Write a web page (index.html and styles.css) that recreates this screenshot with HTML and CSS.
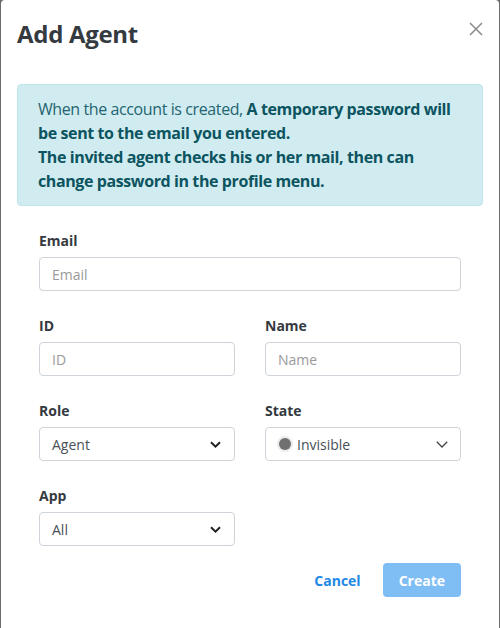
FILE: index.html
```html
<!DOCTYPE html>
<html>
<head>
<meta charset="utf-8">
<link rel="stylesheet" href="styles.css">
</head>
<body>
<div class="modal">
  <div class="modal-header">
    <h4 class="modal-title">Add Agent</h4>
    <button class="close" aria-label="Close">
      <svg width="14" height="14" viewBox="0 0 14 14"><path d="M1 1L13 13M13 1L1 13" stroke="#8a8a8a" stroke-width="1.5" fill="none"/></svg>
    </button>
  </div>
  <div class="modal-body">
    <div class="alert">
      <span class="plain">When the account is created, </span><b>A temporary password will be sent to the email you entered.<br>The invited agent checks his or her mail, then can change password in the profile menu.</b>
    </div>
    <div class="form">
      <div class="group">
        <label class="label">Email</label>
        <div class="control placeholder">Email</div>
      </div>
      <div class="row group">
        <div>
          <label class="label">ID</label>
          <div class="control placeholder">ID</div>
        </div>
        <div>
          <label class="label">Name</label>
          <div class="control placeholder">Name</div>
        </div>
      </div>
      <div class="row group">
        <div>
          <label class="label">Role</label>
          <div class="control select"><span>Agent</span>
            <svg class="chev" width="11" height="7" viewBox="0 0 11 7"><path d="M1 1.2L5.5 5.6L10 1.2" stroke="#222" stroke-width="2" fill="none"/></svg>
          </div>
        </div>
        <div>
          <label class="label">State</label>
          <div class="control select thin"><span class="state"><span class="dot"></span>Invisible</span>
            <svg class="chev" width="12" height="7" viewBox="0 0 12 7"><path d="M0.8 0.8L6 6L11.2 0.8" stroke="#444" stroke-width="1.3" fill="none"/></svg>
          </div>
        </div>
      </div>
      <div class="row group last">
        <div>
          <label class="label">App</label>
          <div class="control select"><span>All</span>
            <svg class="chev" width="11" height="7" viewBox="0 0 11 7"><path d="M1 1.2L5.5 5.6L10 1.2" stroke="#222" stroke-width="2" fill="none"/></svg>
          </div>
        </div>
      </div>
      <div class="footer">
        <button class="btn btn-link">Cancel</button>
        <button class="btn btn-primary" disabled>Create</button>
      </div>
    </div>
  </div>
</div>
</body>
</html>
```
FILE: styles.css
```css
html, body {
  margin: 0;
  padding: 0;
}
body {
  background: #6b6b6b;
  font-family: "Open Sans", "Noto Sans", sans-serif;
  height: 628px;
  overflow: hidden;
}
.modal {
  margin-left: 1px;
  width: 498px;
  height: 628px;
  background: #fff;
  border-radius: 4px 4px 0 0;
}
.modal-header {
  display: flex;
  justify-content: space-between;
  align-items: flex-start;
  padding: 16px;
}
.modal-title {
  margin: 0;
  font-size: 24px;
  line-height: 36px;
  font-weight: 700;
  letter-spacing: -0.3px;
  color: #343a40;
}
.close {
  border: 0;
  background: none;
  padding: 0;
  margin-top: 6px;
  width: 14px;
  height: 14px;
  display: flex;
}
.modal-body {
  padding: 16px;
}
.alert {
  background: #d1ecf1;
  border: 1px solid #bee5eb;
  border-radius: 4px;
  color: #0c5460;
  font-size: 16px;
  line-height: 24px;
  letter-spacing: -0.4px;
  padding: 12px 20px;
  margin-bottom: 24px;
}
.alert .plain {
  color: #1f6470;
}
.alert b {
  font-weight: 700;
}
.form {
  padding: 0 22px;
}
.group {
  margin-bottom: 24px;
}
.group.last {
  margin-bottom: 17px;
}
.row {
  display: grid;
  grid-template-columns: 1fr 1fr;
  column-gap: 30px;
}
.label {
  display: block;
  font-size: 14px;
  line-height: 21px;
  font-weight: 700;
  color: #343a40;
  margin-bottom: 6px;
}
.control {
  box-sizing: border-box;
  height: 34px;
  border: 1px solid #ced4da;
  border-radius: 4px;
  padding: 0 12px;
  font-size: 14px;
  display: flex;
  align-items: center;
  color: #495057;
}
.placeholder {
  color: #9a9a9a;
}
.select {
  justify-content: space-between;
  padding-right: 13px;
}
.select.thin {
  padding-right: 12px;
}
.state {
  display: flex;
  align-items: center;
}
.dot {
  width: 12px;
  height: 12px;
  border-radius: 50%;
  background: #707070;
  box-shadow: 0 0 0 2px #ececec;
  margin-left: 1px;
  margin-right: 6px;
}
.footer {
  display: flex;
  justify-content: flex-end;
  gap: 6px;
}
.btn {
  font-family: inherit;
  font-size: 14px;
  font-weight: 700;
  height: 34px;
  padding: 0 16px;
  border-radius: 4px;
  border: 0;
  background: none;
}
.btn-link {
  color: #2288e6;
}
.btn-primary {
  background: #7fbef5;
  color: #fff;
}
```
